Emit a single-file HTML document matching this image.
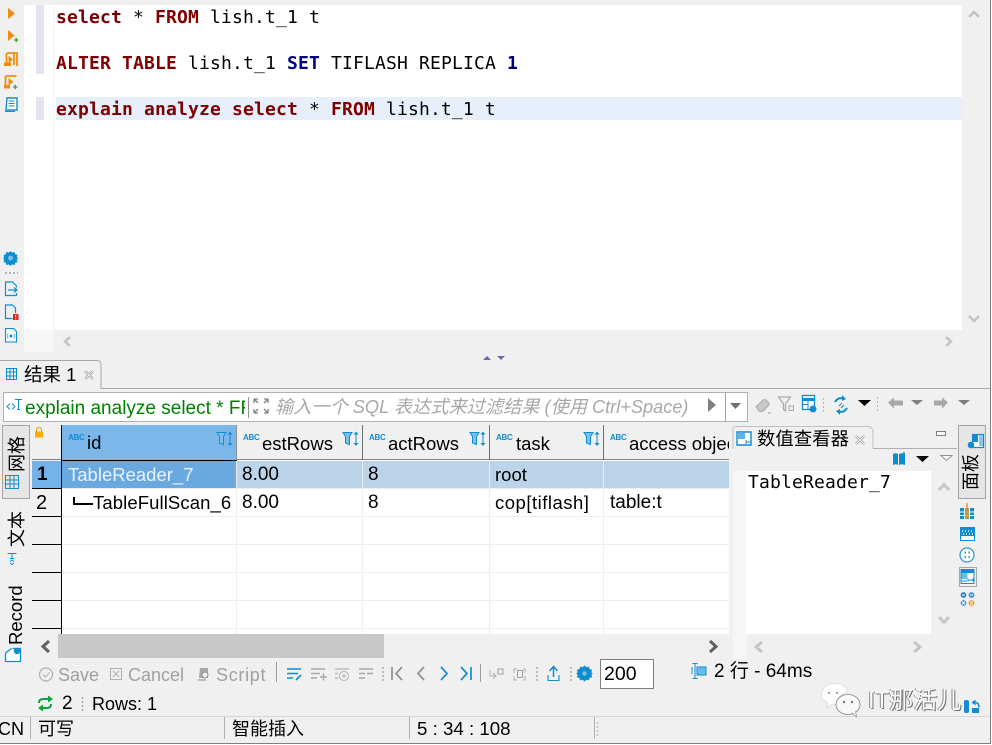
<!DOCTYPE html>
<html><head><meta charset="utf-8"><style>
*{box-sizing:border-box}
html,body{margin:0;padding:0;background:#fff}
#p{position:relative;width:992px;height:745px;overflow:hidden;background:#f0f0f0;font-family:"Liberation Sans","Noto Sans CJK SC",sans-serif;font-size:18px;color:#000}
#p div,#p span.a,#p svg{position:absolute}
.t{white-space:nowrap;line-height:22px}
.m{font-family:"DejaVu Sans Mono",monospace;font-size:18px;letter-spacing:.16px;white-space:pre;line-height:22px;color:#000}
.m b{color:#7f0000;font-weight:bold}.m i{font-style:normal;color:#000080;font-weight:bold}
.rot{transform:rotate(-90deg);transform-origin:left top;white-space:nowrap;line-height:20px}
.g{color:#a0a0a0}
.abc{font:bold 8px "Liberation Sans",sans-serif;color:#108cd0;letter-spacing:-.3px;line-height:8px}
.c{font-size:18.5px}
</style></head><body><div id="p">

<!-- editor -->
<div style="left:24px;top:5px;width:938px;height:325px;background:#fff"></div>
<div style="left:53px;top:5px;width:1px;height:325px;background:#f2f2f2"></div>
<div style="left:36px;top:5px;width:8px;height:69px;background:#e4e4f0"></div>
<div style="left:36px;top:97px;width:8px;height:23px;background:#e4e4f0"></div>
<div style="left:56px;top:97px;width:906px;height:23px;background:#e6effa"></div>
<div class="m" style="left:56px;top:7px"><b>select</b> * <b>FROM</b> lish.t_1 t</div>
<div class="m" style="left:56px;top:53px"><b>ALTER</b> <b>TABLE</b> lish.t_1 <i>SET</i> TIFLASH REPLICA <i>1</i></div>
<div class="m" style="left:56px;top:99px"><b>explain</b> <b>analyze</b> <b>select</b> * <b>FROM</b> lish.t_1 t</div>
<div style="left:24px;top:330px;width:30px;height:22px;background:#f7f7f7"></div>

<!-- left editor toolbar -->
<svg style="left:0;top:0" width="24" height="345" viewBox="0 0 24 345">
<path d="M8 8l7 5.500-7 5.500z" fill="#f08c10"/>
<path d="M8 30l6.500 5.500-6.500 5.500z" fill="#f08c10"/><path d="M14 40h4.500M16.250 37.800v4.500" stroke="#40a040" stroke-width="1.300"/>
<path d="M7 53h10v13M14 53v12" fill="none" stroke="#f08c10" stroke-width="1.800"/><path d="M6.500 53v10" fill="none" stroke="#f08c10" stroke-width="1.800"/><path d="M8.500 55.500l4.500 4-4.500 4z" fill="#f08c10"/><path d="M4 62.500h7v3.500H4z" fill="#f08c10"/>
<path d="M5.500 76h11M5.500 76v10" fill="none" stroke="#f08c10" stroke-width="1.800"/><path d="M8.500 78l5 3.800-5 3.800z" fill="#f08c10"/><rect x="4" y="85" width="6" height="3.500" fill="#f08c10"/><path d="M13 87h4.500M15.250 84.800v4.500" stroke="#40a040" stroke-width="1.300"/>
<path d="M7 98h10v12H6z" fill="#fff" stroke="#108cd0" stroke-width="1.400"/><path d="M8.500 101h6M8.500 103.500h6M8.500 106h6M5 111.500h10" stroke="#108cd0" stroke-width="1.100"/>
<path d="M10.500 251l1.700 1.600 2.300-.7.700 2.300 2.300.7-.7 2.300 1.200 1.300-1.200 1.300.7 2.300-2.300.7-.7 2.300-2.300-.7-1.700 1.600-1.700-1.600-2.300.7-.7-2.300-2.300-.7.7-2.300-1.200-1.300 1.200-1.300-.7-2.300 2.300-.7.7-2.300 2.300.7z" fill="#108cd0"/><circle cx="10.500" cy="258" r="2.400" fill="#7cc0ea"/>
<path d="M5 273h13" stroke="#a8a8a8" stroke-width="1.800" stroke-dasharray="2 2"/>
<path d="M16.500 293v2.500h-11v-13.500h7l4 4v1.500" fill="none" stroke="#108cd0" stroke-width="1.200"/><path d="M8 290h9M14 287.500l3 2.500-3 2.500" fill="none" stroke="#108cd0" stroke-width="1.200"/>
<path d="M12.500 318.500h-7v-13.500h7l3 3v5" fill="none" stroke="#108cd0" stroke-width="1.200"/><rect x="13" y="314" width="5.500" height="6" fill="#e02020"/><path d="M15.700 315v2.500M15.700 318.500v1" stroke="#fff"/>
<path d="M5.500 328.500h8l3 3v10.500h-11z" fill="#f4f9fd" stroke="#108cd0" stroke-width="1.100"/><circle cx="11" cy="336" r="1.500" fill="#108cd0"/><path d="M8 333.500q-1.500 2.500 0 5M14 333.500q1.500 2.500 0 5" fill="none" stroke="#80b8e0"/>
</svg>

<!-- editor scroll arrows -->
<svg style="left:0;top:0" width="992" height="365" viewBox="0 0 992 365">
<path d="M70 337l-5 4.500 5 4.500" fill="none" stroke="#c4c4c4" stroke-width="2.500"/>
<path d="M946 337l5 4.500-5 4.500" fill="none" stroke="#c4c4c4" stroke-width="2.500"/>
<path d="M969 17l5-5 5 5M969 316l5 5 5-5" fill="none" stroke="#c4c4c4" stroke-width="2.500"/>
<path d="M483 360l4-4 4 4z" fill="#6a6aa8"/><path d="M497 356h8l-4 4z" fill="#6a6aa8"/>
</svg>

<!-- tab line -->
<div style="left:101px;top:388px;width:889px;height:1px;background:#a8a8a8"></div>
<svg style="left:0;top:358px" width="104" height="32"><path d="M0 2.500H97q4 0 4 4V30.500" fill="#f0f0f0" stroke="#a8a8a8"/>
<g stroke="#108cd0" fill="none"><rect x="6.500" y="10.500" width="10" height="11"/><path d="M6.500 14h10M6.500 18h10M10 10.500v11M13.500 10.500v11"/></g>
<path d="M85 13l8 8M93 13l-8 8" stroke="#a0a0a0" stroke-width="2.500"/><path d="M85 13l8 8M93 13l-8 8" stroke="#f0f0f0" stroke-width="1"/></svg>
<div class="t" style="left:24px;top:364px;font-size:18.500px">结果 1</div>

<!-- query bar -->
<div style="left:3px;top:392px;width:745px;height:30px;background:#fff;border:1px solid #b0b0b0"></div>
<div style="left:248px;top:397px;width:1px;height:21px;background:#909090"></div>
<div style="left:725px;top:393px;width:1px;height:28px;background:#a0a0a0"></div>
<div class="t" style="left:25px;top:398px;width:220px;overflow:hidden;color:#008000;font-size:19px">explain analyze select * FROM lish.t_1 t</div>
<div class="t" style="left:275px;top:396px;font-style:italic;color:#a8a8a8;font-size:18.200px">输入一个 SQL 表达式来过滤结果 (使用 Ctrl+Space)</div>
<svg style="left:0;top:390px" width="992" height="34" viewBox="0 0 992 34">
<path d="M10 13.500l-3 3 3 3M12 13.500l3 3-3 3" fill="none" stroke="#108cd0"/><path d="M15 9.500h7M18.500 9.500v10M17 19.500h3" fill="none" stroke="#108cd0"/>
<path d="M254 9l4 4M254 9h4M254 9v4M268 9l-4 4M268 9h-4M268 9v4M254 23l4-4M254 23h4M254 23v-4M268 23l-4-4M268 23h-4M268 23v-4" fill="none" stroke="#808080" stroke-width="1.300"/>
<path d="M708 8l8 7-8 7z" fill="#808080"/><path d="M730 13h11l-5.500 6z" fill="#707070"/>
<path d="M756 17l7-7q2-1 3.500.5l2 2q1 1.500 0 3l-6 6h-3z" fill="#c8c8c8" stroke="#a8a8a8"/><path d="M768 23h3" stroke="#a0a0a0"/>
<path d="M778.500 7h12l-5 7v7l-2-1.500V14z" fill="none" stroke="#a8a8a8" stroke-width="1.200"/><rect x="789" y="16" width="4.500" height="4.500" fill="none" stroke="#a8a8a8"/>
<rect x="802.500" y="5.500" width="12" height="14" fill="#fff" stroke="#108cd0" stroke-width="1.300"/><path d="M802 9.500h13" stroke="#108cd0" stroke-width="3"/><path d="M808 10v9M803 14.500h5" stroke="#108cd0"/><circle cx="813" cy="19" r="3.500" fill="#108cd0"/>
<path d="M823 9h1M823 13h1M823 17h1M823 21h1" stroke="#a0a0a0" stroke-width="1.500"/>
<path d="M835 12q3-5 8-3.500M847 18q-3 5-8 3.500" fill="none" stroke="#108cd0" stroke-width="2"/><path d="M842 5l4 4-4 2zM840 25l-4-4 4-2z" fill="#108cd0"/><path d="M839 16l3-3M841 18l3-3" stroke="#108cd0"/>
<path d="M858 10h13l-6.500 6z" fill="#000"/>
<path d="M877 8h1M877 12h1M877 16h1M877 20h1" stroke="#a0a0a0" stroke-width="1.500"/>
<path d="M888 12.500l6-5v3h9v5h-9v3z" fill="#a8a8a8"/>
<path d="M911 10h12l-6 5z" fill="#808080"/>
<path d="M948 12.500l-6-5v3h-8v5h8v3z" fill="#a8a8a8"/>
<path d="M958 10h12l-6 5z" fill="#808080"/>
</svg>

<!-- left vertical tabs -->
<div style="left:2px;top:425px;width:28px;height:74px;background:#e6e6e6;border:1px solid #a4a4a4"></div>
<div class="rot" style="left:7px;top:472px;font-size:18px">网格</div>
<svg style="left:0;top:470px" width="30" height="195" viewBox="0 0 30 195"><g stroke="#108cd0" fill="none"><rect x="5.500" y="5.500" width="13" height="13"/><path d="M5.500 10h13M5.500 14h13M10 5.500v13M14 5.500v13"/></g>
<path d="M7.500 83.500h9M12 83.500v5M10 88.500h4" stroke="#108cd0" fill="none"/><path d="M10 91.500l2-1.500 2 1.500M10 93l2 1.500 2-1.500" stroke="#108cd0" fill="none"/>
<path d="M5.500 183v8.500h15V178.500h-8M5.500 183l6-4.500" fill="#fff" stroke="#108cd0" stroke-width="1.300"/><circle cx="17" cy="181" r="3.200" fill="#108cd0"/></svg>
<div class="rot" style="left:7px;top:547px;font-size:18px">文本</div>
<div class="rot" style="left:6px;top:645px;font-size:18.500px">Record</div>

<!-- grid -->
<div style="left:32px;top:425px;width:697px;height:209px;background:#fff;overflow:hidden">
  <div style="left:0;top:0;width:29px;height:209px;background:#f0f0f0"></div>
  <div style="left:0;top:0;width:697px;height:35px;background:#f0f0f0;border-bottom:1px solid #808080"></div>
  <div style="left:30px;top:0;width:174px;height:36px;background:#7cb7ea"></div>
  <div style="left:29px;top:0;width:1px;height:209px;background:#000"></div>
  <div style="left:0;top:36px;width:697px;height:27px;background:#bcd4ea"></div>
  <div style="left:0;top:36px;width:29px;height:27px;background:#74b2e8"></div>
  <div style="left:29px;top:35px;width:176px;height:29px;background:#6aa8e0;border:1.500px solid #000"></div>
  <div style="left:0;top:63px;width:29px;height:1px;background:#000"></div>
  <div style="left:204px;top:0;width:1px;height:35px;background:#909090"></div>
  <div style="left:330px;top:0;width:1px;height:35px;background:#707070"></div>
  <div style="left:457px;top:0;width:1px;height:35px;background:#707070"></div>
  <div style="left:571px;top:0;width:1px;height:35px;background:#707070"></div>
  <div style="left:204px;top:36px;width:1px;height:173px;background:#eee"></div>
  <div style="left:330px;top:36px;width:1px;height:173px;background:#eee"></div>
  <div style="left:457px;top:36px;width:1px;height:173px;background:#eee"></div>
  <div style="left:571px;top:36px;width:1px;height:173px;background:#eee"></div>
  <div style="left:30px;top:63px;width:667px;height:1px;background:#eee"></div>
  <div style="left:30px;top:91px;width:667px;height:1px;background:#eee"></div>
  <div style="left:30px;top:119px;width:667px;height:1px;background:#eee"></div>
  <div style="left:30px;top:147px;width:667px;height:1px;background:#eee"></div>
  <div style="left:30px;top:175px;width:667px;height:1px;background:#eee"></div>
  <div style="left:30px;top:203px;width:667px;height:1px;background:#eee"></div>
  <div style="left:0;top:91px;width:29px;height:1px;background:#000"></div>
  <div style="left:0;top:119px;width:29px;height:1px;background:#000"></div>
  <div style="left:0;top:147px;width:29px;height:1px;background:#000"></div>
  <div style="left:0;top:175px;width:29px;height:1px;background:#000"></div>
  <div style="left:0;top:203px;width:29px;height:1px;background:#000"></div>

  <div class="abc" style="left:36px;top:9px">ABC</div><div class="t c" style="left:55px;top:7px">id</div>
  <div class="abc" style="left:211px;top:9px">ABC</div><div class="t c" style="left:230px;top:8px">estRows</div>
  <div class="abc" style="left:337px;top:9px">ABC</div><div class="t c" style="left:356px;top:8px">actRows</div>
  <div class="abc" style="left:464px;top:9px">ABC</div><div class="t c" style="left:484px;top:8px">task</div>
  <div class="abc" style="left:578px;top:9px">ABC</div><div class="t c" style="left:597px;top:8px">access object</div>

  <svg style="left:0;top:0" width="697" height="36" viewBox="0 0 697 36">
  <path d="M4.500 7V5q0-2.500 2.500-2.500T9.500 5v2" fill="none" stroke="#e0a000" stroke-width="1"/><rect x="3" y="6.500" width="8" height="6" fill="#f5b000"/>
  <g id="f"><path d="M185 7.500h9l-2.500 4v8l-4-1.500v-6.500z" fill="#7cc0ee" stroke="#108cd0"/><path d="M198 6.500l-2.500 3h5zM198 21l-2.500-3h5z" fill="#108cd0"/><path d="M198 9v9" stroke="#108cd0"/></g>
  <use href="#f" x="126"/><use href="#f" x="253"/><use href="#f" x="367"/>
  </svg>

  <div class="t c" style="left:36px;top:39px;color:#e8f2fb">TableReader_7</div>
  <div class="t" style="left:210px;top:39px;font-size:19px">8.00</div>
  <div class="t" style="left:336px;top:39px;font-size:19px">8</div>
  <div class="t c" style="left:463px;top:39px">root</div>
  <div class="t" style="left:5px;top:39px;font-weight:bold;font-size:19px">1</div>
  <div class="t" style="left:4px;top:67px;font-size:20px">2</div>
  <div style="left:41px;top:72px;width:2px;height:8px;background:#000"></div>
  <div style="left:41px;top:78px;width:20px;height:2px;background:#000"></div>
  <div class="t c" style="left:61px;top:67px;letter-spacing:.1px">TableFullScan_6</div>
  <div class="t" style="left:210px;top:67px;font-size:19px">8.00</div>
  <div class="t" style="left:336px;top:67px;font-size:19px">8</div>
  <div class="t c" style="left:463px;top:67px;letter-spacing:.5px">cop[tiflash]</div>
  <div class="t" style="left:578px;top:67px;font-size:19px">table:t</div>
</div>

<!-- hscroll -->
<div style="left:58px;top:634px;width:326px;height:24px;background:#c8c8c8"></div>
<svg style="left:0;top:630px" width="992" height="30" viewBox="0 0 992 30">
<path d="M49 11l-6 5.500 6 5.500" fill="none" stroke="#606060" stroke-width="3"/>
<path d="M710 11l6 5.500-6 5.500" fill="none" stroke="#606060" stroke-width="3"/>
<path d="M762 12l-6 5 6 5M914 12l6 5-6 5" fill="none" stroke="#c4c4c4" stroke-width="3"/>
</svg>

<!-- right panel -->
<div style="left:733px;top:471px;width:13px;height:188px;background:#f6f6f6"></div>
<div style="left:729px;top:425px;width:4px;height:209px;background:#f0f0f0"></div>
<div style="left:746px;top:471px;width:185px;height:163px;background:#fff"></div>
<div class="m" style="left:748px;top:472px">TableReader_7</div>
<div style="left:873px;top:448px;width:84px;height:1px;background:#b0b0b0"></div>
<svg style="left:730px;top:422px" width="150" height="30" viewBox="0 0 150 30"><path d="M3 26.500V7q0-2.500 2.500-2.500H138q3 0 5 4V26.500" fill="#f0f0f0" stroke="#c0c0c0"/>
<path d="M7 10h14v13H7z" fill="#fff" stroke="#108cd0" stroke-width="1.400"/><path d="M8 11h7v6H8z" fill="#5cb4e8"/><path d="M16 20h5M16 18v4M21 18v4" stroke="#108cd0"/>
<path d="M126 14l8 8M134 14l-8 8" stroke="#a0a0a0" stroke-width="2.500"/><path d="M126 14l8 8M134 14l-8 8" stroke="#f0f0f0" stroke-width="1"/></svg>
<div class="t" style="left:757px;top:428px;font-size:18.400px">数值查看器</div>
<svg style="left:880px;top:425px" width="80" height="45" viewBox="0 0 80 45">
<rect x="56.500" y="6.500" width="9" height="4" fill="#f8f8f8" stroke="#808080"/>
<path d="M13 29q3-1.500 5 0V40q-2-1.500-5 0zM19 29q3-1.500 6 0V40q-3-1.500-6 0z" fill="#108cd0"/><path d="M24 27v6" stroke="#108cd0" stroke-width="1.500"/>
<path d="M36 31h13l-6.500 6z" fill="#000"/>
<path d="M61 30.500h11l-5.500 5z" fill="#fff" stroke="#909090"/>
</svg>
<svg style="left:930px;top:470px" width="40" height="170" viewBox="0 0 40 170">
<path d="M9 20l5-5.500 5 5.500M9 147l5 5.500 5-5.500" fill="none" stroke="#c8c8c8" stroke-width="3"/>
</svg>

<!-- right sidebar -->
<div style="left:958px;top:425px;width:28px;height:74px;background:#e6e6e6;border:1px solid #a4a4a4"></div>
<div class="rot" style="left:961px;top:490px;font-size:18px">面板</div>
<svg style="left:958px;top:428px" width="32" height="185" viewBox="0 0 32 185">
<rect x="14.500" y="6.500" width="11" height="13" fill="#fff" stroke="#108cd0" stroke-width="1.200"/><path d="M14 6h6v8h-6z" fill="#108cd0"/><path d="M21 7h4v11h-4z" fill="#88c8ee"/><circle cx="13" cy="17" r="3.300" fill="#108cd0"/>
<rect x="2" y="80" width="14" height="11" fill="#108cd0"/><path d="M2 84h14M2 87.500h14M6.500 80v11M11.500 80v11" stroke="#fff"/><path d="M7 80h4v11H7z" fill="#f59020" opacity=".75"/><path d="M9 75v5" stroke="#f59020" stroke-width="1.500"/>
<rect x="2.500" y="99.500" width="14" height="13" fill="#fff" stroke="#108cd0"/><path d="M3 100h14v8H3z" fill="#108cd0"/><path d="M4 103h1M7 103h1M10 103h1M13 103h1M5 106h1M8 106h1M11 106h1M14 106h1" stroke="#fff" stroke-width="1.500"/>
<circle cx="9" cy="127" r="7" fill="#fff" stroke="#3a96d8" stroke-width="1.300"/><path d="M6.500 124.500h1.500M10.500 124.500h1.500M6.500 129h1.500M10.500 129h1.500" stroke="#108cd0" stroke-width="1.700"/>
<rect x="1.500" y="139.500" width="17" height="19" fill="#f0f0f0" stroke="#a4a4a4"/><rect x="3" y="141.500" width="13" height="14" fill="#fff" stroke="#108cd0"/><path d="M3.500 142h12v3h-12z" fill="#108cd0"/><path d="M3.500 145h6v6h-6z" fill="#6abce8"/><path d="M10 152h5M10 150.500v3M15 150.500v3M3 153h6" stroke="#108cd0"/>
<circle cx="5.500" cy="167" r="2.900" fill="#2e80c0"/><circle cx="13.500" cy="167" r="2.900" fill="#3a96d8"/><circle cx="5.500" cy="175" r="2.900" fill="#3a96d8"/><circle cx="13.500" cy="175" r="2.900" fill="#f59020"/>
<path d="M4 167h3M12 167h3M4 173.500l3 3M7 173.500l-3 3M12 174h3M12 176h3" stroke="#fff" stroke-width=".9"/>
</svg>

<!-- bottom toolbar -->
<div class="t g" style="left:58px;top:664px;font-size:18px">Save</div>
<div class="t g" style="left:128px;top:664px;font-size:18px">Cancel</div>
<div class="t g" style="left:216px;top:664px;font-size:18px;letter-spacing:.7px">Script</div>
<svg style="left:0;top:655px" width="620" height="40" viewBox="0 0 620 40">
<circle cx="46" cy="19.500" r="6.500" fill="none" stroke="#b0b0b0" stroke-width="1.200"/><path d="M43 19.500l2.500 2.500 4-4.500" fill="none" stroke="#b0b0b0"/>
<rect x="110.500" y="13.500" width="11" height="11" fill="none" stroke="#b0b0b0"/><path d="M113 16l6 6M119 16l-6 6" stroke="#b0b0b0"/>
<path d="M200 13h8v10h-9z" fill="#a8a8a8"/><circle cx="205" cy="20" r="3" fill="#f0f0f0" stroke="#909090"/><path d="M198 25h8" stroke="#a8a8a8" stroke-width="1.500"/>
<path d="M276.500 7v20" stroke="#a0a0a0"/>
<path d="M287 14h14M287 18.500h11M287 23h6" stroke="#108cd0" stroke-width="1.500"/><path d="M296 25l5-5" stroke="#108cd0" stroke-width="1.700"/>
<path d="M311 14h14M311 18.500h9M311 23h6" stroke="#a8a8a8" stroke-width="1.500"/><path d="M320 22h7M323.500 18.500v7" stroke="#a8a8a8" stroke-width="1.500"/>
<path d="M335 14h14M335 18.500h3M335 23h3" stroke="#b0b0b0" stroke-width="1.300"/><circle cx="344" cy="21" r="4.500" fill="none" stroke="#b0b0b0"/><path d="M342 21h4M344 19v4" stroke="#b0b0b0"/>
<path d="M359 14h14M359 18.500h6M367 18.500h6M359 23h6" stroke="#a8a8a8" stroke-width="1.500"/>
<path d="M383 12v2M383 16v2M383 20v2M383 24v2" stroke="#a8a8a8" stroke-width="1.500"/>
<path d="M392 12v13" stroke="#909090" stroke-width="1.700"/><path d="M402 12l-6 6.500 6 6.500" fill="none" stroke="#909090" stroke-width="1.700"/>
<path d="M424 12l-6 6.500 6 6.500" fill="none" stroke="#909090" stroke-width="1.700"/>
<path d="M441 12l6 6.500-6 6.500" fill="none" stroke="#108cd0" stroke-width="1.700"/>
<path d="M461 12l6 6.500-6 6.500" fill="none" stroke="#108cd0" stroke-width="1.700"/><path d="M471 12v13" stroke="#108cd0" stroke-width="1.700"/>
<path d="M480.500 9v18" stroke="#a0a0a0"/>
<path d="M490 15v6h5M493 18l3 3-3 3" fill="none" stroke="#b0b0b0"/><path d="M498 14h5v5h-5z" fill="none" stroke="#a0a0a0"/>
<path d="M514 18v-4h3M523 14h2v4M514 21v4h3M523 25h2v-4" fill="none" stroke="#b0b0b0"/><rect x="517.500" y="15.500" width="5" height="7" fill="none" stroke="#a0a0a0"/>
<path d="M537 12v2M537 16v2M537 20v2M537 24v2" stroke="#a8a8a8" stroke-width="1.500"/>
<path d="M553.500 22v-10M549.500 16l4-4.500 4 4.500" fill="none" stroke="#108cd0" stroke-width="1.500"/><path d="M548 20v5.500h11V20" fill="none" stroke="#108cd0" stroke-width="1.100"/>
<path d="M571 12v2M571 16v2M571 20v2M571 24v2" stroke="#a8a8a8" stroke-width="1.500"/>
<path d="M584.500 11.500l1.900 1.800 2.500-.7.700 2.500 2.500.7-.7 2.500 1.400 1.200-1.400 1.200.7 2.500-2.500.7-.7 2.500-2.500-.7-1.900 1.800-1.900-1.800-2.500.7-.7-2.500-2.500-.7.7-2.500-1.400-1.200 1.400-1.200-.7-2.500 2.500-.7.7-2.500 2.500.7z" fill="#108cd0" transform="translate(0 -1)"/><circle cx="584.500" cy="18.500" r="2.200" fill="#7cc0ea"/>
</svg>
<div style="left:600px;top:659px;width:54px;height:30px;background:#fff;border:1px solid #808080"></div>
<div class="t" style="left:604px;top:663px;font-size:19.500px">200</div>

<!-- result info -->
<svg style="left:690px;top:660px" width="20" height="24" viewBox="0 0 20 24"><rect x="7" y="7" width="9" height="8" fill="#6abce8" stroke="#108cd0"/><path d="M2.500 3.500h5M5 3.500v15M2.500 18.500h5M2 7v7" fill="none" stroke="#108cd0"/></svg>
<div class="t" style="left:714px;top:661px;font-size:19px">2 行 - 64ms</div>

<!-- status row -->
<svg style="left:36px;top:694px" width="22" height="20" viewBox="0 0 22 20"><path d="M3 9q0-4 4-4h7M15 10q0 4-4 4H5" fill="none" stroke="#10a040" stroke-width="2"/><path d="M12 1.500l5 3.500-5 3.500zM7 10.500L2 14l5 3.500z" fill="#10a040"/></svg>
<div class="t" style="left:62px;top:693px;font-size:19px">2</div>
<svg style="left:80px;top:696px" width="6" height="18"><path d="M2.500 1v2M2.500 5v2M2.500 9v2M2.500 13v2" stroke="#a8a8a8" stroke-width="1.500"/></svg>
<div class="t" style="left:92px;top:693px;font-size:18px">Rows: 1</div>

<!-- status bar -->
<div style="left:0;top:716px;width:990px;height:1px;background:#d8d8d8"></div>
<div class="t" style="left:-2px;top:718px;font-size:18px">CN</div>
<div style="left:30px;top:717px;width:1px;height:22px;background:#b0b0b0"></div>
<div class="t" style="left:38px;top:718px;font-size:18px">可写</div>
<div style="left:224px;top:717px;width:1px;height:22px;background:#b0b0b0"></div>
<div class="t" style="left:232px;top:718px;font-size:18px">智能插入</div>
<div style="left:409px;top:717px;width:1px;height:22px;background:#b0b0b0"></div>
<div class="t" style="left:417px;top:718px;font-size:18.700px">5 : 34 : 108</div>
<div style="left:594px;top:717px;width:1px;height:22px;background:#b0b0b0"></div>
<svg style="left:596px;top:722px" width="4" height="16"><path d="M1.500 0v16" stroke="#c0c0c0" stroke-width="1.500" stroke-dasharray="2 2"/></svg>

<!-- watermark -->
<svg style="left:818px;top:680px" width="165" height="40" viewBox="0 0 165 40">
<path d="M3.500 16q0-12 13-12.500 12 0 13.500 9-5 0-8 3.500t-2 8.500q-3 0-5-.5l-6 3.500 1-5q-6.500-2.500-6.500-6.500z" fill="#fff" stroke="#d0d0d0" stroke-width=".6"/>
<ellipse cx="30" cy="24.500" rx="12" ry="10" fill="#f8f8f8" stroke="#808080" stroke-width=".8"/><path d="M34 33l4.500 4-1-6" fill="#f8f8f8" stroke="#808080" stroke-width=".6"/>
<circle cx="26" cy="22" r="1.100" fill="#666"/><circle cx="34" cy="22" r="1.100" fill="#666"/><circle cx="11" cy="13" r="1.100" fill="#999"/><circle cx="19" cy="13" r="1.100" fill="#999"/>
<rect x="146" y="20" width="5" height="13" rx="2" fill="#108cd0"/><path d="M154 28h7v5h-7z" fill="#108cd0"/><path d="M155 22.500q6-1 6 5" fill="none" stroke="#108cd0" stroke-width="1.500"/><path d="M157.500 19.500l-4 3 4 3z" fill="#108cd0"/>
</svg>
<div class="t" style="left:868px;top:690px;font-size:24px;color:#fbfbfb;text-shadow:-1px 0 #8a8a8a,1px 1px #707070">IT那活儿</div>

<!-- window edge -->
<div style="left:990px;top:0;width:1px;height:744px;background:#808080"></div>
<div style="left:991px;top:0;width:1px;height:745px;background:#fff"></div>
<div style="left:0;top:743px;width:991px;height:1px;background:#808080"></div>
<div style="left:0;top:744px;width:992px;height:1px;background:#fff"></div>
</div></body></html>
